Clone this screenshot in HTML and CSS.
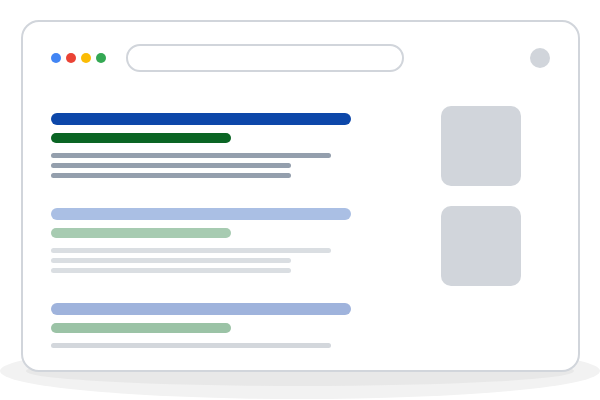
FILE: index.html
```html
<!DOCTYPE html>
<html lang="en">
<head>
    <meta charset="UTF-8">
    <meta name="viewport" content="width=device-width, initial-scale=1.0">
    <title>Search Results Illustration</title>
    <link rel="stylesheet" href="styles.css">
</head>
<body>
    <div class="scene">
        <!-- soft floor shadow under the window -->
        <svg class="floor" width="600" height="60" viewBox="0 0 600 60">
            <ellipse cx="300" cy="30" rx="300" ry="28" fill="#f2f2f2"/>
            <ellipse cx="300" cy="30" rx="274" ry="15" fill="#e8e8e8"/>
        </svg>

        <div class="window">
            <div class="toolbar">
                <div class="dots">
                    <span class="dot blue"></span>
                    <span class="dot red"></span>
                    <span class="dot yellow"></span>
                    <span class="dot green"></span>
                </div>
                <div class="search"></div>
                <div class="avatar"></div>
            </div>

            <div class="content">
                <div class="results">
                    <div class="result r1">
                        <div class="title"></div>
                        <div class="url"></div>
                        <div class="lines">
                            <div class="line long"></div>
                            <div class="line"></div>
                            <div class="line"></div>
                        </div>
                    </div>
                    <div class="result r2">
                        <div class="title"></div>
                        <div class="url"></div>
                        <div class="lines">
                            <div class="line long"></div>
                            <div class="line"></div>
                            <div class="line"></div>
                        </div>
                    </div>
                    <div class="result r3">
                        <div class="title"></div>
                        <div class="url"></div>
                        <div class="lines">
                            <div class="line long"></div>
                        </div>
                    </div>
                </div>

                <div class="thumbs">
                    <div class="thumb"></div>
                    <div class="thumb"></div>
                </div>
            </div>
        </div>
    </div>
</body>
</html>
```

FILE: styles.css
```css
body {
    margin: 0;
    background: #ffffff;
    font-family: "Liberation Sans", Arial, sans-serif;
}
.scene {
    position: relative;
    width: 600px;
    height: 400px;
    overflow: hidden;
    padding-top: 20px;
    box-sizing: border-box;
}
.floor {
    position: absolute;
    left: 0;
    top: 341px;
}
.window {
    position: relative;
    margin-left: 21px;
    width: 559px;
    height: 352px;
    box-sizing: border-box;
    border: 2px solid #d1d5db;
    border-radius: 18px;
    background: #ffffff;
    overflow: hidden;
}
.toolbar {
    display: flex;
    align-items: center;
    height: 28px;
    padding: 22px 28px 0 28px;
}
.dots {
    display: flex;
    gap: 5px;
}
.dot {
    width: 10px;
    height: 10px;
    border-radius: 50%;
}
.dot.blue { background: #4285f4; }
.dot.red { background: #ea4335; }
.dot.yellow { background: #fbbc05; }
.dot.green { background: #34a853; }
.search {
    margin-left: 20px;
    width: 278px;
    height: 28px;
    box-sizing: border-box;
    border: 2px solid #d1d5db;
    border-radius: 14px;
}
.avatar {
    margin-left: auto;
    width: 20px;
    height: 20px;
    border-radius: 50%;
    background: #d1d5db;
}
.content {
    display: flex;
    padding-left: 28px;
}
.results {
    display: flex;
    flex-direction: column;
    gap: 30px;
    width: 300px;
    padding-top: 41px;
}
.result .title {
    width: 300px;
    height: 12px;
    border-radius: 6px;
}
.result .url {
    width: 180px;
    height: 10px;
    border-radius: 5px;
    margin-top: 8px;
}
.lines {
    display: flex;
    flex-direction: column;
    gap: 5px;
    margin-top: 10px;
}
.line {
    width: 240px;
    height: 5px;
    border-radius: 3px;
}
.line.long {
    width: 280px;
}
.r1 .title { background: #0d47a9; }
.r1 .url { background: #0a6524; }
.r1 .line { background: #949fad; }
.r2 .title { background: #aabfe4; }
.r2 .url { background: #a7cbb1; }
.r2 .line { background: #dadee2; }
.r3 .title { background: #9fb3dc; }
.r3 .url { background: #9bc3a6; }
.r3 .line { background: #d3d7dc; }
.thumbs {
    display: flex;
    flex-direction: column;
    gap: 20px;
    margin-left: 90px;
    padding-top: 34px;
}
.thumb {
    width: 80px;
    height: 80px;
    border-radius: 10px;
    background: #d1d5db;
}
```
